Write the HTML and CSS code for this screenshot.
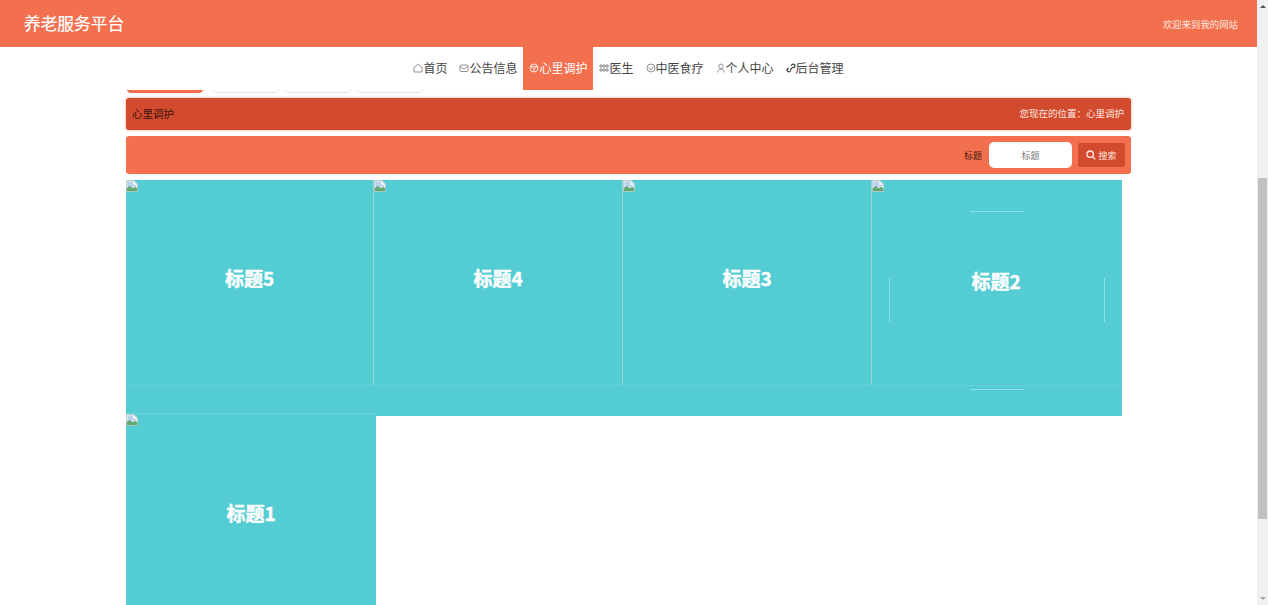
FILE: index.html
```html
<!DOCTYPE html>
<html lang="zh">
  <head>
    <meta charset="UTF-8" />
    <meta name="viewport" content="width=device-width, initial-scale=1.0" />
    <title>养老服务平台</title>
    <link rel="stylesheet" href="styles.css">
  </head>
  <body>
    <svg class="defs" width="0" height="0">
      <symbol id="broken" viewBox="0 0 16 16">
        <path d="M0.500 0.500h10l5 5v10h-15z" fill="#eef1f2" stroke="#c3c8ca" />
        <path d="M2 2h7.500v4.500H14V8L2 11z" fill="#b9d2ee" />
        <path d="M1 15v-4l4-3 4 3 3-2 3 2v4z" fill="#62a875" />
      </symbol>
    </svg>

    <div class="page">
      <div class="main">
        <header class="topbar">
          <div class="brand">养老服务平台</div>
          <div class="welcome">欢迎来到我的网站</div>
        </header>

        <nav class="nav">
          <a class="nav-item">
            <svg class="ico" viewBox="0 0 10 10"><path d="M1 4.500 5 1l4 3.500V9H1z" /></svg>首页
          </a>
          <a class="nav-item">
            <svg class="ico" viewBox="0 0 10 10"><rect x="1" y="2" width="8" height="6.500" rx="1" /><path d="M1 3.500 5 6l4-2.500" /></svg>公告信息
          </a>
          <a class="nav-item active">
            <svg class="ico" viewBox="0 0 10 10"><circle cx="5" cy="5" r="4" /><path d="M2 3.500h6L5 6zM5 6v3" /></svg>心里调护
          </a>
          <a class="nav-item">
            <svg class="ico" viewBox="0 0 10 10"><path d="M1 2h2v2H1zM4 2h2v2H4zM7 2h2v2H7zM1 6h2v2H1zM4 6h2v2H4zM7 6h2v2H7z" /></svg>医生
          </a>
          <a class="nav-item">
            <svg class="ico" viewBox="0 0 10 10"><circle cx="5" cy="5" r="4" /><path d="M3 4.500 5 7l2-3.500" /></svg>中医食疗
          </a>
          <a class="nav-item">
            <svg class="ico" viewBox="0 0 10 10"><circle cx="5" cy="3.300" r="2.200" /><path d="M1.500 9.500C2 7 3.500 6 5 6s3 1 3.500 3.500" /></svg>个人中心
          </a>
          <a class="nav-item">
            <svg class="ico ico-dark" viewBox="0 0 10 10"><path d="M4.200 6.800 6.800 4.200M5 2.600l1-1a1.700 1.700 0 0 1 2.400 2.400l-1 1M5 7.400l-1 1A1.700 1.700 0 0 1 1.600 6l1-1" /></svg>后台管理
          </a>
        </nav>

        <div class="content">
          <div class="tabs">
            <div class="tab tab-on"></div>
            <div class="tab"></div>
            <div class="tab"></div>
            <div class="tab"></div>
          </div>

          <div class="crumb">
            <span class="crumb-title">心里调护</span>
            <span class="crumb-path">您现在的位置：心里调护</span>
          </div>

          <div class="search">
            <label class="search-label" for="title">标题</label>
            <input class="search-input" id="title" placeholder="标题" />
            <button class="search-btn">
              <svg class="search-ico" viewBox="0 0 10 10"><circle cx="4.200" cy="4.200" r="3.200" /><path d="M6.600 6.600 9.200 9.200" /></svg>搜索
            </button>
          </div>

          <div class="list">
            <div class="row">
              <div class="card card-first">
                <svg class="broken"><use href="#broken" /></svg>
                <div class="card-title">标题5</div>
              </div>
              <div class="card">
                <svg class="broken"><use href="#broken" /></svg>
                <div class="card-title">标题4</div>
              </div>
              <div class="card">
                <svg class="broken"><use href="#broken" /></svg>
                <div class="card-title">标题3</div>
              </div>
              <div class="card card-hover">
                <svg class="broken"><use href="#broken" /></svg>
                <div class="card-title">标题2</div>
                <i class="edge edge-top"></i>
                <i class="edge edge-bottom"></i>
                <i class="edge edge-left"></i>
                <i class="edge edge-right"></i>
              </div>
            </div>
            <div class="card card-last">
              <svg class="broken"><use href="#broken" /></svg>
              <div class="card-title">标题1</div>
            </div>
          </div>
        </div>
      </div>

      <div class="scrollbar">
        <div class="arrow arrow-up"></div>
        <div class="track"><div class="thumb"></div></div>
        <div class="arrow arrow-down"></div>
      </div>
    </div>
  </body>
</html>
```

FILE: styles.css
```css
html,
body {
  margin: 0;
  height: 100%;
  overflow: hidden;
  background-color: #fff;
  font-family: "Noto Sans CJK SC", "Liberation Sans", sans-serif;
}
.defs {
  display: block;
  height: 0;
}
.page {
  display: flex;
  height: 605px;
}
.main {
  width: 1257px;
  overflow: hidden;
}

/* top bar */
.topbar {
  display: flex;
  justify-content: space-between;
  align-items: center;
  height: 47px;
  padding: 0 19px 0 24px;
  background-color: #f3704f;
  color: #fff;
}
.brand {
  margin-bottom: 2px;
  font-size: 16.7px;
  -webkit-text-stroke: 0.2px #fff;
}
.welcome {
  font-size: 9.4px;
  color: #fde6df;
}

/* nav */
.nav {
  display: flex;
  justify-content: center;
  height: 43px;
  background-color: #fff;
}
.nav-item {
  display: flex;
  align-items: center;
  padding: 0 6px 2px;
  font-size: 12px;
  color: #444;
}
.nav-item.active {
  background-color: #f3704f;
  color: #fff;
}
.ico {
  width: 10px;
  height: 10px;
  fill: none;
  stroke: #777;
  stroke-width: 0.8;
}
.active .ico {
  stroke: #fff;
}
.ico-dark {
  stroke: #333;
  stroke-width: 1.2;
}

/* content */
.content {
  width: 1005px;
  margin-left: 126px;
}
.tabs {
  display: flex;
  align-items: flex-end;
  height: 3px;
  overflow: hidden;
}
.tab {
  flex-shrink: 0;
  width: 68px;
  height: 20px;
  margin-right: 4px;
  box-sizing: border-box;
  background-color: #fff;
  border: 1px solid #e8dfe0;
  border-radius: 5px;
}
.tab-on {
  width: 78px;
  margin-right: 8px;
  background-color: #f3704f;
  border-color: #f3704f;
}
.crumb {
  display: flex;
  justify-content: space-between;
  align-items: center;
  box-sizing: border-box;
  height: 32px;
  margin-top: 5px;
  padding: 0 7px 2px 6px;
  background-color: #d24b2f;
  border-radius: 3px;
  box-shadow: 0 0 3px #f4a48f;
}
.crumb-title {
  font-size: 10.5px;
  color: #3a120a;
}
.crumb-path {
  font-size: 9.5px;
  color: #fde6df;
}
.search {
  display: flex;
  justify-content: flex-end;
  align-items: center;
  height: 38px;
  margin-top: 6px;
  padding: 0 6px;
  background-color: #f3704f;
  border-radius: 3px;
}
.search-label {
  margin-right: 7px;
  font-size: 9px;
  color: #4a1a10;
}
.search-input {
  box-sizing: border-box;
  width: 83px;
  height: 26px;
  padding: 0;
  margin-right: 6px;
  border: none;
  border-radius: 5px;
  background-color: #fff;
  font-family: inherit;
  font-size: 9px;
  text-align: center;
}
.search-input::placeholder {
  color: #777;
}
.search-btn {
  display: flex;
  align-items: center;
  justify-content: center;
  width: 47px;
  height: 24px;
  padding: 0;
  border: none;
  border-radius: 2px;
  background-color: #d24b2f;
  color: #fde6df;
  font-family: inherit;
  font-size: 9px;
}
.search-ico {
  width: 10px;
  height: 10px;
  margin-right: 2px;
  fill: none;
  stroke: #fde6df;
  stroke-width: 1.3;
}

/* list */
.list {
  width: 996px;
  margin-top: 6px;
}
.row {
  display: flex;
  height: 236px;
  background-color: #54ccd3;
  background-image: linear-gradient(#63d1d7, #63d1d7);
  background-repeat: no-repeat;
  background-position: 0 205px;
  background-size: 100% 1px;
}
.card {
  position: relative;
  box-sizing: border-box;
  width: 249px;
  height: 205px;
  padding-top: 85px;
  background-color: #54ccd3;
  border-right: 1px solid #97d3d6;
  text-align: center;
}
.card-first {
  width: 248px;
}
.card-hover {
  width: 250px;
  height: 236px;
  padding: 88px 2px 0 0;
  background-color: transparent;
  border-right: none;
}
.card-last {
  width: 250px;
  height: 211px;
  margin-top: -3px;
  padding-top: 86px;
  border-top: 1px solid #70d5da;
  border-right: none;
}
.broken {
  position: absolute;
  top: 0;
  left: 0;
  width: 12px;
  height: 12px;
}
.card-title {
  font-size: 19px;
  font-weight: bold;
  line-height: 26px;
  color: #fff;
  -webkit-text-stroke: 0.4px #fff;
}
.edge {
  position: absolute;
  background-color: #8ddfe3;
}
.edge-top,
.edge-bottom {
  left: 98px;
  width: 54px;
  height: 1px;
}
.edge-top {
  top: 31px;
}
.edge-bottom {
  top: 209px;
}
.edge-left,
.edge-right {
  top: 98px;
  width: 1px;
  height: 44px;
}
.edge-left {
  left: 17px;
}
.edge-right {
  left: 232px;
}

/* scrollbar */
.scrollbar {
  display: flex;
  flex-direction: column;
  align-items: center;
  width: 11px;
  background-color: #f1f1f1;
}
.arrow {
  flex-shrink: 0;
  width: 0;
  height: 0;
  border-left: 3px solid transparent;
  border-right: 3px solid transparent;
}
.arrow-up {
  margin: 5px 0 4px;
  border-bottom: 3px solid #505050;
}
.arrow-down {
  margin: 4px 0 5px;
  border-top: 3px solid #a3a3a3;
}
.track {
  flex: 1;
  width: 100%;
  padding-top: 166px;
  box-sizing: border-box;
}
.thumb {
  height: 341px;
  margin: 0 1px;
  background-color: #c1c1c1;
}
```
